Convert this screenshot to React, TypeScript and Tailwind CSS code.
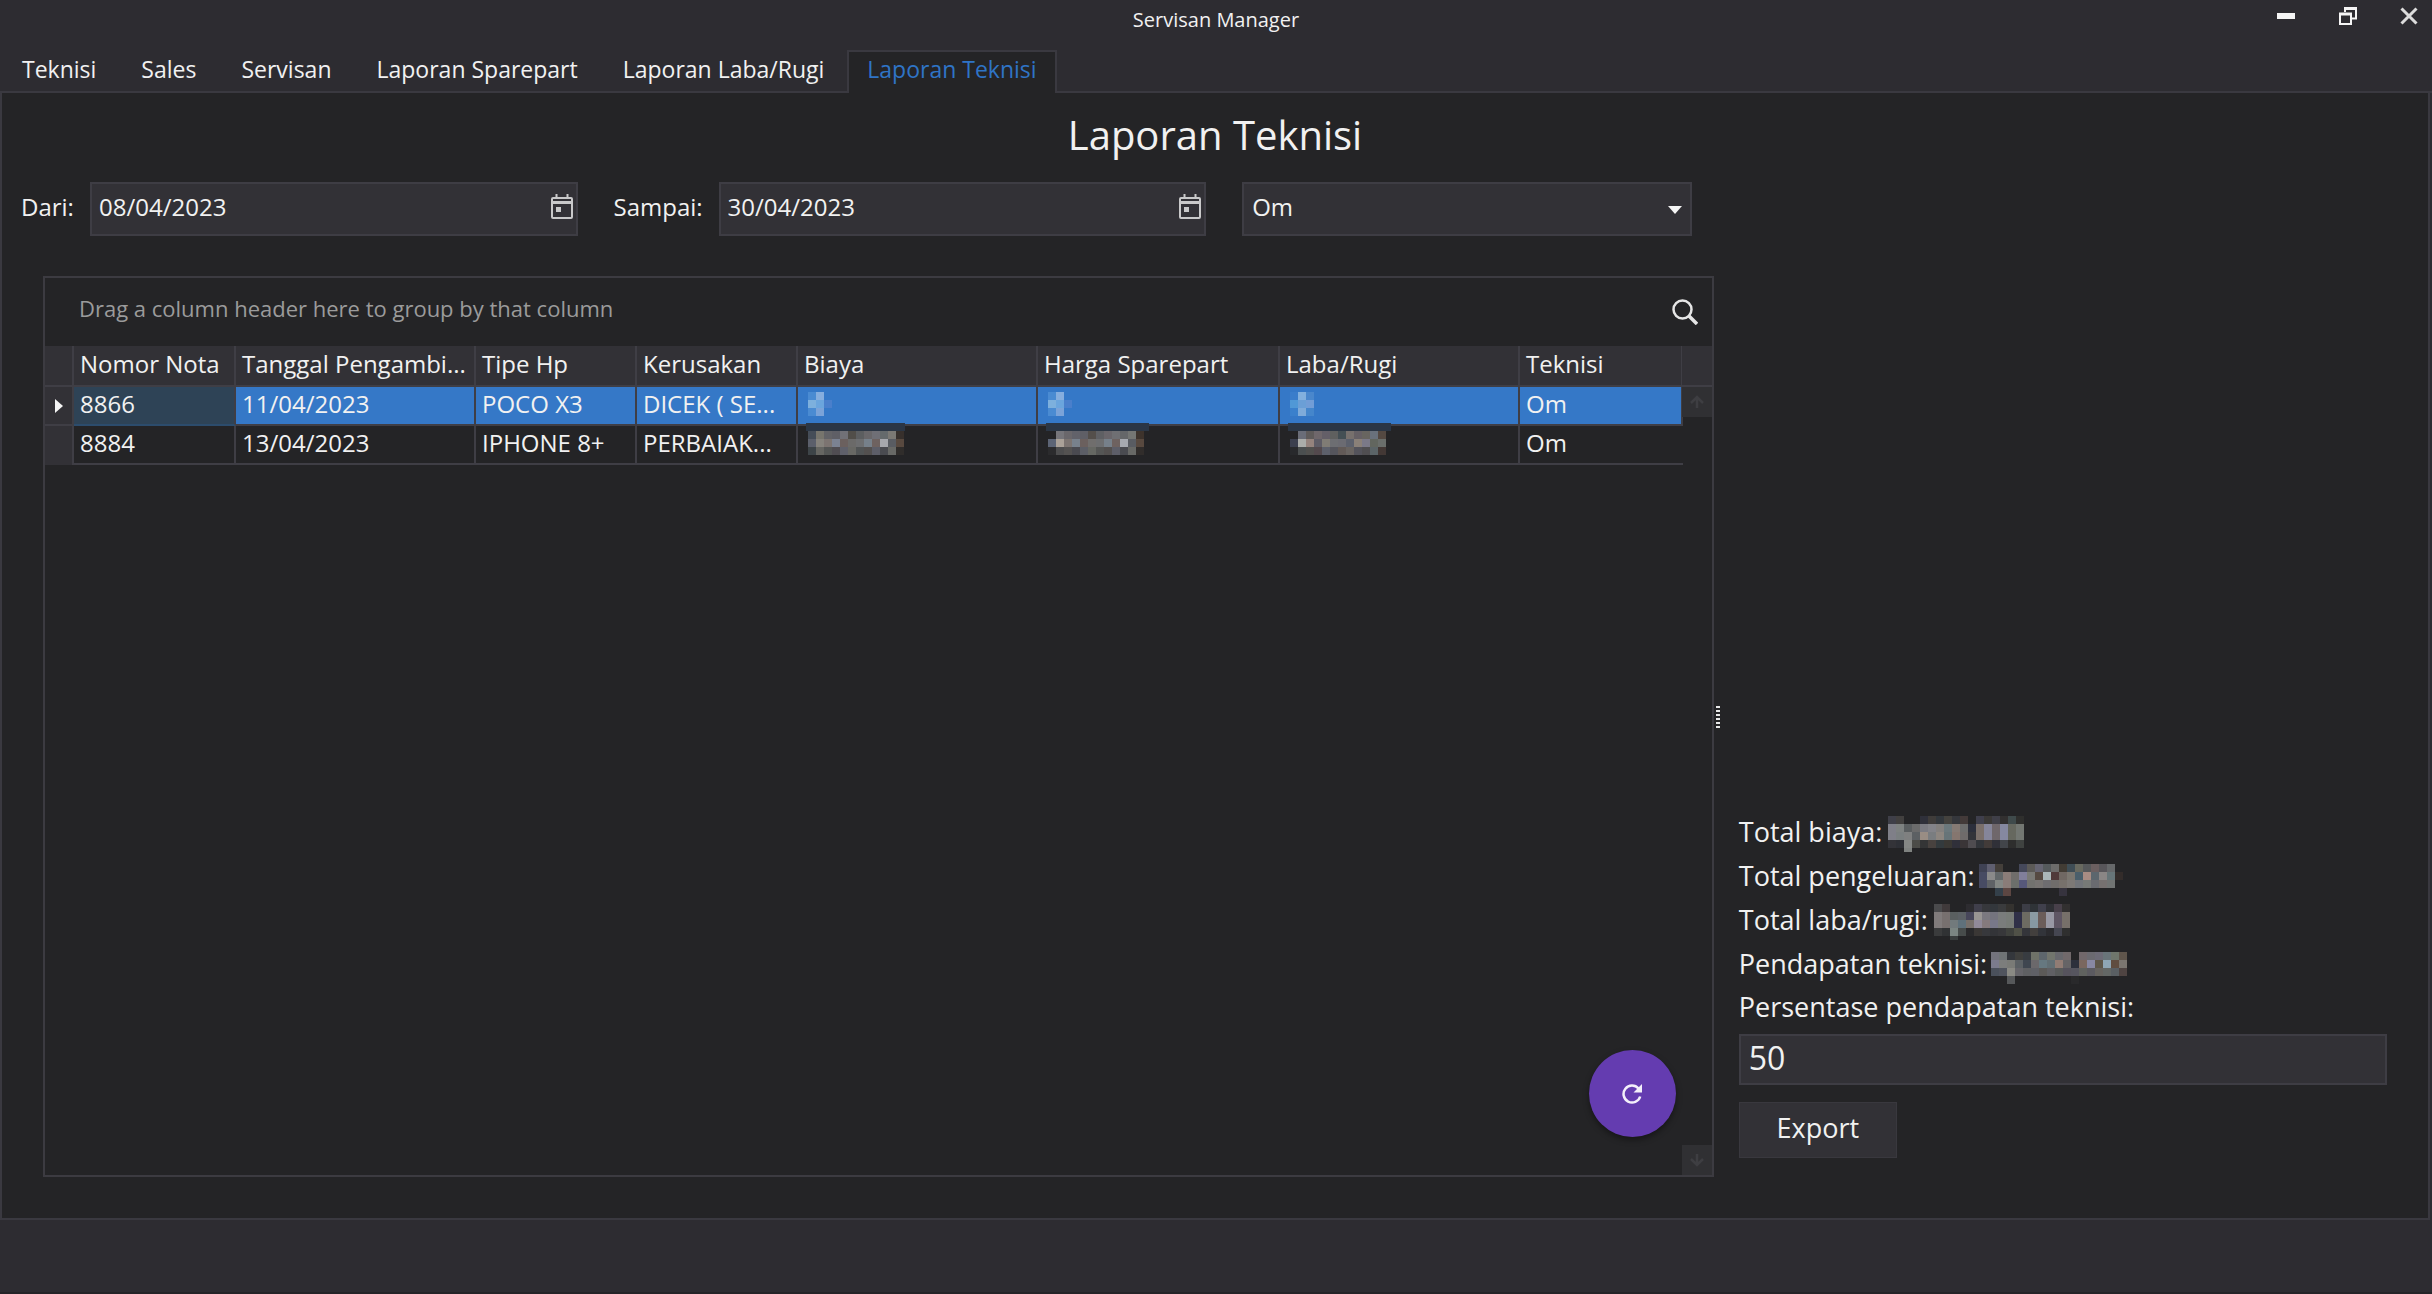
import React from "react";

const CELL = 8;

type MosaicProps = { rows: string[]; cols: number; height: number; strip?: number; label: string };

/* Pixelated patch that hides an amount. Rows hold hex colours, "-" is an empty cell. */
function Mosaic({ rows, cols, height, strip, label }: MosaicProps) {
  return (
    <svg
      role="img"
      aria-label={label}
      width={cols * CELL}
      height={height}
      shapeRendering="crispEdges"
      className="block shrink-0 overflow-visible"
    >
      {strip ? <rect x={-2} y={-8} width={strip} height={8} fill="#2b3645" /> : null}
      {rows.map((row, y) =>
        row.split(" ").map((c, x) =>
          c === "-" ? null : (
            <rect key={`${x}-${y}`} x={x * CELL} y={y * CELL} width={CELL} height={y === 4 ? 4 : CELL} fill={`#${c}`} />
          ),
        ),
      )}
    </svg>
  );
}

const zeroA = ["4a8bd2 86aede -", "7db0dd 6ba5dd 4a7fcb", "4a8bd2 7ba3d8 -"];
const zeroB = ["3a7dcb 82b0de 4a87cc", "5098d6 6b9fd6 729dd6", "3a80cc 7fabd9 4586cb"];

const amountA = [
  "454d58 77756d 636367 5f5f66 717177 514e49 5c5e60 69676a 6f6f76 656a6c 7b7974 37302c",
  "5b5f6b 85827c 7c7471 7b8292 6b605e 6b6a69 6d6e70 76808a 6e6260 a7a8ad 595c62 58493f",
  "3d4448 666662 545655 504d52 5f606a 686864 515455 53504f 5d5e68 4a4b50 686966 302d2b",
];
const amountB = [
  "- 76757a 6a676b 62626a 5f5f66 544f4b 5f6064 6a666b 6f6f73 656769 747673 3d332c",
  "5c6475 aaa198 7c7471 78818c 6b605e 706e6d 6d6e70 76808a 6e6260 a7aab0 595c62 58493f",
  "2b2b2d 4d4d4e 545251 4a4a50 5c5e66 666863 555655 53504f 5d5e68 4a4b50 686966 312d2b",
];
const amountC = [
  "- 6a6d78 5f5b5a 6f676b 645f68 5f605f 444f54 77706d 666065 686560 69717c 544942",
  "3b3f4e abadaa 95837d 5e5c66 807c75 6d6e72 6b6b72 5c606c 8a8078 7b7988 62665f 6a6e6b",
  "28292c 4b4f50 51504e 53494d 5d606b 55555c 625a57 696461 54535b 504e51 5b6467 433835",
];

const totalBiaya = [
  "3f3f48 42403f - - 2f303a 3f3c3a 32373c 44423e 35373c 433a39 - 3f3f4c 3a3836 3f3f48 323030 3f4a4b 2f2f2d",
  "7f7f88 7e8281 5a5e60 6b6b6b 7b7b82 838389 83807e 6b787c 857a74 6d6d6d 2c2f3c 7a6f6a 85859a 6f676b 8588a0 66685f 737772",
  "7f7f88 7a7f80 7f8080 5c6063 998d84 7a7d80 8d8680 677478 85766f 6f6b6b 33343a 7a6f6a 85859a 6f676b 8588a0 66685f 737772",
  "333338 2e3036 858785 4c4c48 343536 48423f 333a3d 3a3834 30303a 3a3537 4f4c50 32353a 423b39 303038 42454a 2e2e2d 3f4240",
  "- - 7f8280 - - - - - - - - - - - - - -",
];
const totalPengeluaran = [
  "3f4254 5f5f70 443f3a - - 45485a 5c5a57 666572 555a5c 6d6c6b 423c34 3f4d55 68695f 56585a 6b5f60 58565a 66686a",
  "474b63 8a8a8a 63686a 8a7c78 706d6b 817f9b 7a7a76 564a42 aab7b9 503a3a 706863 7b7770 4a5f6b a88c83 5c666d 8a8685 677578 332c2a",
  "474b63 5f6266 838784 8a7c78 6c6f6b 56587a 72726f 777472 6e6d70 706d6b 77716c 7d7976 72757a 777a77 6a6b70 767170 717473",
  "- - 34404a 5c4642 - - - - - - 36333e - - - - - -",
];
const totalLaba = [
  "4a4a4c 403a3b - - 2d2c30 403f4b 37383c 33373c 3a3b3d 34322f - 3c3d46 2f3337 40404c 2f3035 48404a 323030",
  "807b7b 77706f 5a5f60 5c6165 47465a 989593 7b7980 74747e 7a7c7c 787c78 303048 6d6b62 8c9ba3 6b5d5a 9898a4 5f5664 77706a",
  "807b7b 77706f 727a7c 5f717b 77706b 918a99 857a7d 78788a 7a7c7c 777b77 303048 6d6b62 8698a2 6b5d5a 9898a4 5f5664 77706a",
  "3a3b3c 303234 7b8582 474c4b 29292b 3a3735 37383c 333438 37373a 3f413d 505147 34353a 423f3d 32343a 2b2b2f 454651 2f2f2f",
  "- - 3a3e3e - - - - - - - - - - - - - -",
];
const pendapatan = [
  "73737c 6f7375 34373c 3f3f3d 383c41 6f7268 5e666c 72756d 68686d 71696b - 71686b 6b6a70 6d6b76 697479 6f766c 60564c",
  "7b7b8d 7c7d7c 7a7b77 5b6064 3f4650 6b686b 667880 626f74 917c74 666466 2d303c 7a675f 8888a3 5e574a 8ea6b5 604d40 7b7670",
  "4a505b 50545e 8a8a84 66656a 5f6063 5f6066 5c5a58 606064 585a5a 56535d 56555f 60625f 5b5a60 66635f 636765 5a5f63 4f4442",
  "- - 56585a - - - - - - - 29292b - - - - - -",
];

function CalendarIcon() {
  return (
    <svg viewBox="0 0 24 26" width="24" height="26" fill="none" stroke="#c9c9ca" strokeWidth="2" aria-hidden="true">
      <rect x="2" y="4" width="20" height="20" rx="1" />
      <path d="M2 8.500h20" strokeWidth="3" />
      <path d="M6.500 0v5M17.500 0v5" />
      <rect x="6" y="13" width="5" height="5" fill="#c9c9ca" stroke="none" />
    </svg>
  );
}

function DateField({ id, value }: { id: string; value: string }) {
  return (
    <div className="min-w-0 flex-[13]">
      <div className="flex h-[54px] items-center border-2 border-[#3e3d44] bg-[#323136] pr-0.5 pl-[7px]">
        <input
          id={id}
          type="text"
          defaultValue={value}
          className="min-w-0 flex-1 bg-transparent pb-1 text-2xl text-[#f1f1f1] outline-none"
        />
        <button type="button" aria-label="Pilih tanggal" className="pb-1">
          <CalendarIcon />
        </button>
      </div>
    </div>
  );
}

const tabs = ["Teknisi", "Sales", "Servisan", "Laporan Sparepart", "Laporan Laba/Rugi", "Laporan Teknisi"];

const columns = [
  { name: "Nomor Nota", width: 162 },
  { name: "Tanggal Pengambi...", width: 240 },
  { name: "Tipe Hp", width: 161 },
  { name: "Kerusakan", width: 161 },
  { name: "Biaya", width: 240 },
  { name: "Harga Sparepart", width: 242 },
  { name: "Laba/Rugi", width: 240 },
  { name: "Teknisi", width: 163 },
];

const cell = "h-[39px] whitespace-nowrap border-r-2 border-b-2 border-[#3f3e45] pl-1.5 pb-1";
const patch = "h-[39px] border-r-2 border-b-2 border-[#3f3e45] align-top pt-[5px] pl-2.5";

function ReportTable() {
  return (
    <table className="w-full table-fixed border-separate border-spacing-0 text-left text-2xl leading-8 text-[#f1f1f1]">
      <colgroup>
        <col style={{ width: 29 }} />
        {columns.map((c) => (
          <col key={c.name} style={{ width: c.width }} />
        ))}
      </colgroup>
      <thead className="bg-[#323136]">
        <tr>
          <th aria-label="Penanda baris" className="h-[41px] border-r-2 border-b-2 border-[#3f3e45]" />
          {columns.map((c) => (
            <th
              key={c.name}
              className="h-[41px] border-r-2 border-b-2 border-[#3f3e45] pb-1 pl-1.5 font-normal whitespace-nowrap"
            >
              {c.name}
            </th>
          ))}
        </tr>
      </thead>
      <tbody>
        <tr className="bg-[#3578c7]">
          <td className="border-r-2 border-b-2 border-[#3f3e45] bg-[#323136]">
            <svg width="8" height="14" viewBox="0 0 8 14" className="ml-2.5" aria-hidden="true">
              <path d="M0 0L8 7L0 14Z" fill="#f5f5f5" />
            </svg>
          </td>
          <td className="h-[39px] border-r-2 border-b-2 border-[#3f3e45] border-b-[#2c4c6c] bg-[#2e4356] pb-1 pl-1.5">8866</td>
          <td className={cell}>11/04/2023</td>
          <td className={cell}>POCO X3</td>
          <td className={cell}>DICEK ( SE...</td>
          <td className={patch}>
            <Mosaic label="Biaya disamarkan" rows={zeroA} cols={3} height={24} />
          </td>
          <td className={patch}>
            <Mosaic label="Harga disamarkan" rows={zeroA} cols={3} height={24} />
          </td>
          <td className={patch}>
            <Mosaic label="Laba disamarkan" rows={zeroB} cols={3} height={24} />
          </td>
          <td className={cell}>Om</td>
        </tr>
        <tr>
          <td className="border-r-2 border-[#3f3e45] bg-[#323136]" />
          <td className={cell}>8884</td>
          <td className={cell}>13/04/2023</td>
          <td className={cell}>IPHONE 8+</td>
          <td className={cell}>PERBAIAK...</td>
          <td className={patch}>
            <Mosaic label="Biaya disamarkan" rows={amountA} cols={12} height={24} strip={99} />
          </td>
          <td className={patch}>
            <Mosaic label="Harga disamarkan" rows={amountB} cols={12} height={24} strip={103} />
          </td>
          <td className={patch}>
            <Mosaic label="Laba disamarkan" rows={amountC} cols={12} height={24} strip={103} />
          </td>
          <td className="h-[39px] border-b-2 border-[#3f3e45] pb-1 pl-1.5">Om</td>
        </tr>
      </tbody>
    </table>
  );
}

const totals = [
  { label: "Total biaya:", rows: totalBiaya, height: 32, gap: "gap-1.5" },
  { label: "Total pengeluaran:", rows: totalPengeluaran, height: 24, gap: "gap-1" },
  { label: "Total laba/rugi:", rows: totalLaba, height: 32, gap: "gap-1.5" },
  { label: "Pendapatan teknisi:", rows: pendapatan, height: 24, gap: "gap-1" },
];

export default function App() {
  return (
    <div className="flex min-h-screen flex-col bg-[#2d2c31] font-['Open_Sans','Noto_Sans',sans-serif] text-[#f1f1f1]">
      <header className="grid h-[50px] grid-cols-3">
        <h1 className="col-start-2 pt-1 text-center text-xl leading-8">Servisan Manager</h1>
        <div className="flex h-8 items-center justify-end gap-[42px] pr-3.5">
          <button type="button" aria-label="Minimize">
            <svg width="20" height="20" viewBox="0 0 20 20">
              <path d="M1 7h18v6H1z" fill="#f5f5f5" />
            </svg>
          </button>
          <button type="button" aria-label="Restore">
            <svg width="20" height="20" viewBox="0 0 20 20" fill="none" stroke="#f5f5f5">
              <path d="M7 6V1.500M6.500 2.500H19M18 2v11M19 12.500h-5" strokeWidth="2" />
              <path d="M6 2.500h13" strokeWidth="3" />
              <rect x="2" y="8" width="11" height="10" strokeWidth="2" />
              <path d="M1 8h13" strokeWidth="3" />
            </svg>
          </button>
          <button type="button" aria-label="Close">
            <svg width="18" height="18" viewBox="0 0 18 18" stroke="#dcdcdc" strokeWidth="3">
              <path d="M1.500 1.500L16.500 16.500M16.500 1.500L1.500 16.500" />
            </svg>
          </button>
        </div>
      </header>

      <nav role="tablist" className="flex h-[43px] text-[23px] leading-8">
        {tabs.map((t, i) => (
          <button
            key={t}
            type="button"
            role="tab"
            aria-selected={i === 5}
            className={
              i === 5
                ? "border-2 border-b-0 border-[#3a3940] bg-[#242426] px-[18px] pb-2 whitespace-nowrap text-[#2f74c6]"
                : "border-b-2 border-[#3a3940] pr-[23px] pb-1 pl-[22px] whitespace-nowrap"
            }
          >
            {t}
          </button>
        ))}
        <span className="flex-1 border-b-2 border-[#3a3940]" />
      </nav>

      <main className="mr-0.5 flex flex-1 flex-col border-x-2 border-b-2 border-[#3a3940] bg-[#242426]">
        <h2 className="pt-[15px] text-center text-[40px] leading-[54px]">Laporan Teknisi</h2>

        <form className="mt-5 flex w-[70%] items-center pr-2 pl-[19px] text-2xl leading-8">
          <label htmlFor="dari" className="w-[69px] pb-1">
            Dari:
          </label>
          <DateField id="dari" value="08/04/2023" />
          <label htmlFor="sampai" className="ml-9 w-[105px] pb-1">
            Sampai:
          </label>
          <DateField id="sampai" value="30/04/2023" />
          <div className="relative ml-9 h-[54px] min-w-0 flex-[12]">
            <select
              aria-label="Teknisi"
              defaultValue="Om"
              className="h-full w-full appearance-none border-2 border-[#3e3d44] bg-[#323136] pb-1 pl-2 text-2xl text-[#f1f1f1]"
            >
              <option>Om</option>
            </select>
            <svg
              width="14"
              height="8"
              viewBox="0 0 14 8"
              className="pointer-events-none absolute top-6 right-2.5"
              aria-hidden="true"
            >
              <path d="M0 0H14L7 8Z" fill="#f5f5f5" />
            </svg>
          </div>
        </form>

        <div className="mt-5 flex flex-1 px-[41px] pb-[41px]">
          <section className="relative mt-5 flex min-w-0 flex-[18] flex-col border-2 border-[#3c3b41]">
            <div className="flex h-[68px] items-center justify-between pr-[14px] pl-[34px]">
              <p className="pb-2 text-[22px] leading-8 text-[#9b9b9b]">Drag a column header here to group by that column</p>
              <button type="button" aria-label="Cari">
                <svg width="26" height="26" viewBox="0 0 26 26" fill="none" stroke="#e6e6e6" aria-hidden="true">
                  <circle cx="10.500" cy="10.500" r="9" strokeWidth="2.500" />
                  <path d="M17 17l8 8" strokeWidth="3.500" />
                </svg>
              </button>
            </div>
            <div className="flex flex-1">
              <div className="min-w-0 flex-1">
                <ReportTable />
              </div>
              <div className="flex w-[30px] flex-col">
                <div className="h-[41px] border-b-2 border-[#3f3e45] bg-[#323136]" />
                <button type="button" aria-label="Gulir ke atas" className="grid h-[30px] place-items-center bg-[#303033]">
                  <svg width="14" height="14" viewBox="0 0 14 14" fill="none" stroke="#3e3e42" strokeWidth="2.500" aria-hidden="true">
                    <path d="M7 13V2M1 8l6-6l6 6" />
                  </svg>
                </button>
                <div className="flex-1" />
                <button type="button" aria-label="Gulir ke bawah" className="grid h-[30px] place-items-center bg-[#303033]">
                  <svg width="14" height="14" viewBox="0 0 14 14" fill="none" stroke="#3e3e42" strokeWidth="2.500" aria-hidden="true">
                    <path d="M7 1v11M1 6l6 6l6-6" />
                  </svg>
                </button>
              </div>
            </div>
            <button
              type="button"
              aria-label="Muat ulang"
              className="absolute right-9 bottom-[38px] grid size-[87px] place-items-center rounded-full bg-[#643cb0] shadow-[0_3px_6px_rgba(0,0,0,0.4)]"
            >
              <svg width="20" height="20" viewBox="0 0 20 20" fill="none" stroke="#f3effa" strokeWidth="2.500" aria-hidden="true">
                <path d="M16.500 4.500A8.500 8.500 0 1 0 18.200 12.500" />
                <path d="M20 0V8.500H11.500Z" fill="#f3effa" stroke="none" />
              </svg>
            </button>
          </section>

          <div role="separator" aria-orientation="vertical" className="flex w-[25px] flex-col justify-center gap-0.5 pl-0.5">
            <span className="h-0.5 w-1 bg-[#e8e8e8]" />
            <span className="h-0.5 w-1 bg-[#e8e8e8]" />
            <span className="h-0.5 w-1 bg-[#e8e8e8]" />
            <span className="h-0.5 w-1 bg-[#e8e8e8]" />
            <span className="h-0.5 w-1 bg-[#e8e8e8]" />
            <span className="h-0.5 w-1 bg-[#e8e8e8]" />
          </div>

          <aside className="flex min-w-0 flex-[7] flex-col justify-end pb-[19px] text-[27px] leading-8">
            {totals.map((t) => (
              <div key={t.label} className={`flex h-11 items-center ${t.gap}`}>
                <span>{t.label}</span>
                <Mosaic label="Jumlah disamarkan" rows={t.rows} cols={17} height={t.height} />
              </div>
            ))}
            <label htmlFor="persentase" className="flex h-[42px] items-center">
              Persentase pendapatan teknisi:
            </label>
            <input
              id="persentase"
              type="text"
              defaultValue="50"
              className="mt-1.5 h-[51px] w-full border-2 border-[#3e3d44] bg-[#323136] px-2 pb-1 text-[32px] text-[#f1f1f1] outline-none"
            />
            <button type="button" className="mt-[17px] h-14 w-[158px] border border-[#39383e] bg-[#323136] pb-1">
              Export
            </button>
          </aside>
        </div>
      </main>
      <footer className="h-[74px] border-b-2 border-[#252428]" />
    </div>
  );
}
